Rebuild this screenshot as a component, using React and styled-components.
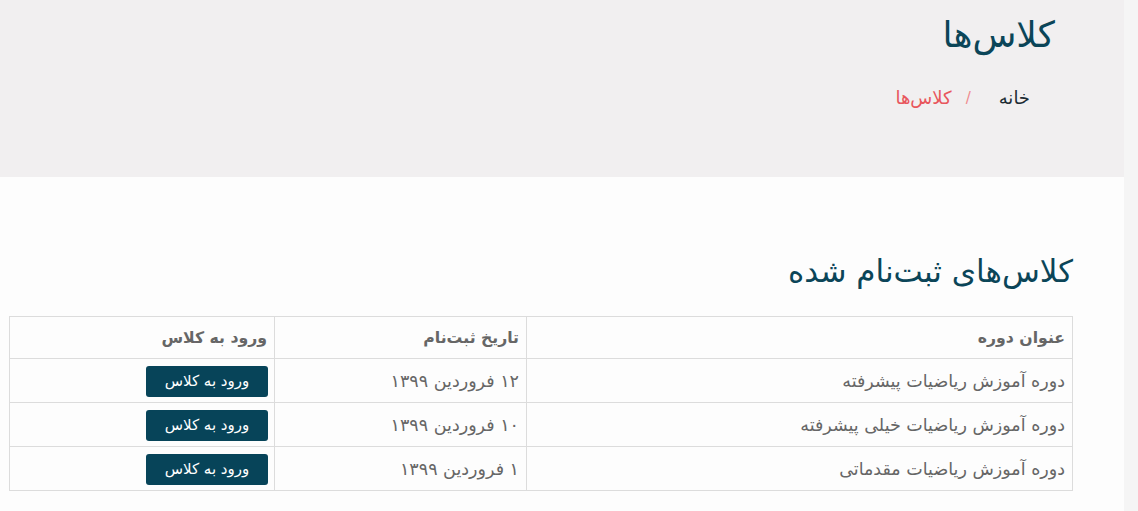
import styled, { createGlobalStyle } from "styled-components";

const GlobalStyle = createGlobalStyle`
  html, body {
    margin: 0;
    padding: 0;
    background: #f5f5f5;
  }
  body {
    font-family: "DejaVu Sans", "Noto Sans", sans-serif;
  }
`;

const Page = styled.div`
  display: flex;
  flex-direction: row;
  direction: ltr;
  min-height: 511px;
`;

const Main = styled.main`
  width: 1124px;
  direction: rtl;
  background: #fdfdfd;
  min-height: 511px;
`;

const Banner = styled.header`
  height: 177px;
  box-sizing: border-box;
  background: #f1eff0;
  padding: 12px 69px 0 0;
`;

const PageTitle = styled.h1`
  margin: 0;
  font-size: 36px;
  font-weight: 500;
  color: #0b4558;
  line-height: 46px;
`;

const Breadcrumb = styled.nav`
  display: flex;
  align-items: center;
  margin-top: 28px;
  padding-right: 25px;
  font-size: 18px;
  line-height: 24px;
`;

const Crumb = styled.span`
  color: ${(p) => (p.$active ? "#e8565c" : "#1c2b33")};
`;

const Separator = styled.span`
  color: #f08a8e;
  font-size: 15px;
  margin: 0 28px 0 14px;
`;

const Content = styled.section`
  padding: 72px 51px 0 9px;
`;

const SectionTitle = styled.h2`
  margin: 0 0 23px;
  font-size: 31px;
  font-weight: 500;
  color: #0b4558;
  line-height: 44px;
`;

const Table = styled.table`
  width: 100%;
  table-layout: fixed;
  border-collapse: collapse;
  font-size: 17.5px;
  color: #666;
`;

const Th = styled.th`
  box-sizing: border-box;
  text-align: right;
  font-weight: 600;
  font-size: 15.7px;
  color: #666;
  height: 42px;
  padding: 0 7px;
  border: 1px solid #dcdcdc;
  width: ${(p) => p.$width || "auto"};
`;

const Td = styled.td`
  height: 43px;
  padding: 0 7px;
  border: 1px solid #dcdcdc;
`;

const ButtonCell = styled(Td)`
  height: 42px;
  padding: 1px 6px 0 0;
`;

const EnterButton = styled.button`
  display: block;
  width: 122px;
  height: 31px;
  padding: 0;
  border: none;
  border-radius: 3px;
  background: #074459;
  color: #fff;
  font-family: inherit;
  font-size: 15px;
  font-weight: 500;
  cursor: pointer;
`;

const Scrollbar = styled.div`
  flex: 1;
  background: #f5f5f5;
`;

const classes = [
  { title: "دوره آموزش ریاضیات پیشرفته", date: "۱۲ فروردین ۱۳۹۹" },
  { title: "دوره آموزش ریاضیات خیلی پیشرفته", date: "۱۰ فروردین ۱۳۹۹" },
  { title: "دوره آموزش ریاضیات مقدماتی", date: "۱ فروردین ۱۳۹۹" },
];

export default function App() {
  return (
    <>
      <GlobalStyle />
      <Page>
        <Main>
          <Banner>
            <PageTitle>کلاس‌ها</PageTitle>
            <Breadcrumb>
              <Crumb>خانه</Crumb>
              <Separator>/</Separator>
              <Crumb $active>کلاس‌ها</Crumb>
            </Breadcrumb>
          </Banner>
          <Content>
            <SectionTitle>کلاس‌های ثبت‌نام شده</SectionTitle>
            <Table>
              <thead>
                <tr>
                  <Th $width="546px">عنوان دوره</Th>
                  <Th $width="252px">تاریخ ثبت‌نام</Th>
                  <Th>ورود به کلاس</Th>
                </tr>
              </thead>
              <tbody>
                {classes.map((c) => (
                  <tr key={c.title}>
                    <Td>{c.title}</Td>
                    <Td>{c.date}</Td>
                    <ButtonCell>
                      <EnterButton>ورود به کلاس</EnterButton>
                    </ButtonCell>
                  </tr>
                ))}
              </tbody>
            </Table>
          </Content>
        </Main>
        <Scrollbar />
      </Page>
    </>
  );
}
